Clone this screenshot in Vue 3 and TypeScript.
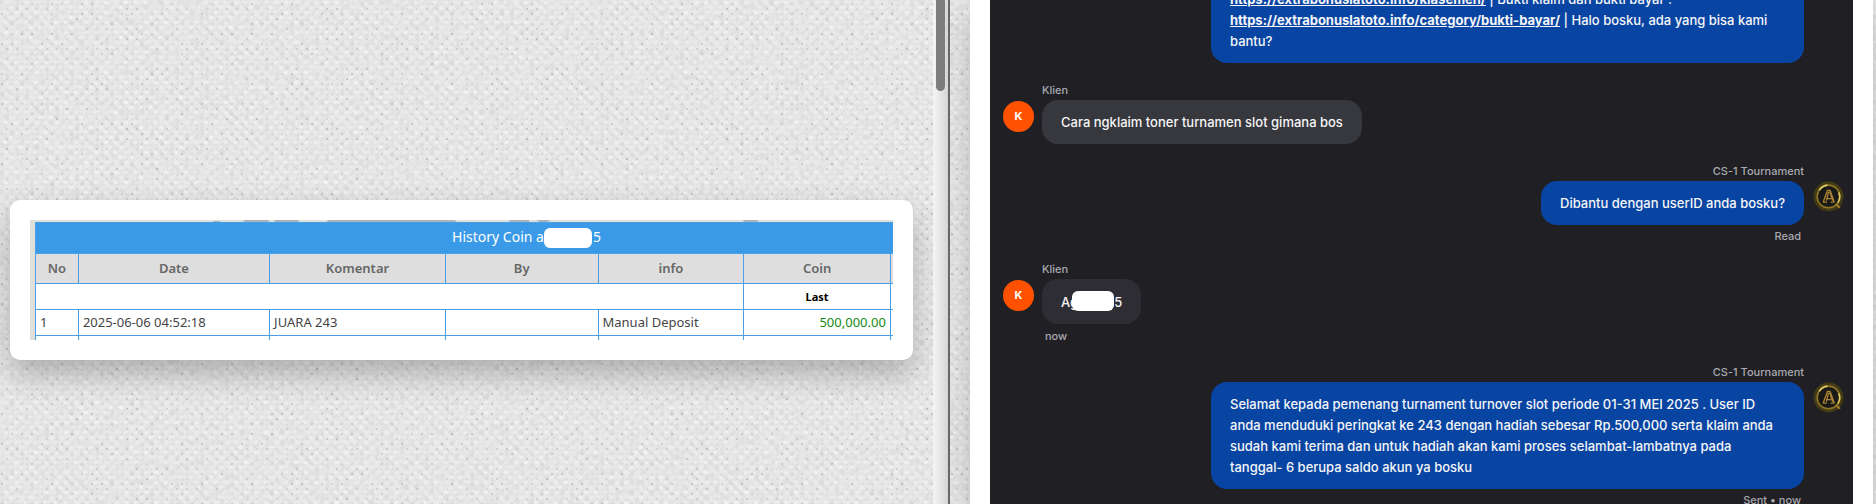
<script setup lang="ts">
interface Speck { x: number; y: number; o: number; w: number }
interface Message {
  id: number
  side: 'client' | 'agent'
  author: string
  text?: string
  tone?: string
  status?: string
}

// Woven paper: staggered dots with seeded variation in strength.
let seed = 7
function random(): number {
  seed = (seed * 16807) % 2147483647
  return seed / 2147483647
}
const tile = 200
const specks: Speck[] = []
const threads: Speck[] = []
for (let row = 0; row < tile / 5; row++) {
  for (let col = 0; col < tile / 10; col++) {
    const x = col * 10 + (row % 2) * 5
    specks.push({ x: x + 1, y: row * 5 + 3, o: 0.03 + random() * random() * 0.2, w: 2 })
    threads.push({ x: x + 4, y: row * 5 + 1, o: 0.1 + random() * 0.35, w: 4 })
  }
}

const columns: string[] = ['No', 'Date', 'Komentar', 'By', 'info', 'Coin']

const messages: Message[] = [
  { id: 2, side: 'client', author: 'Klien', text: 'Cara ngklaim toner turnamen slot gimana bos' },
  { id: 3, side: 'agent', author: 'CS-1 Tournament', text: 'Dibantu dengan userID anda bosku?', status: 'Read' },
  { id: 4, side: 'client', author: 'Klien', tone: 'dim', status: 'now' },
  {
    id: 5,
    side: 'agent',
    author: 'CS-1 Tournament',
    text: 'Selamat kepada pemenang turnament turnover slot periode 01-31 MEI 2025 . User ID anda menduduki peringkat ke 243 dengan hadiah sebesar Rp.500,000 serta klaim anda sudah kami terima dan untuk hadiah akan kami proses selambat-lambatnya pada tanggal- 6 berupa saldo akun ya bosku',
    status: 'Sent • now',
  },
]
</script>

<template>
  <div class="page">
    <svg class="paper" aria-hidden="true">
      <defs>
        <pattern id="weave" :width="tile" :height="tile" patternUnits="userSpaceOnUse">
          <rect :width="tile" :height="tile" fill="#e8e8e8" />
          <rect v-for="(t, i) in threads" :key="'t' + i" :x="t.x" :y="t.y" :width="t.w" height="3" rx="1" fill="#fff" :opacity="t.o" />
          <rect v-for="(s, i) in specks" :key="'s' + i" :x="s.x" :y="s.y" :width="s.w" height="2" rx="1" fill="#000" :opacity="s.o" />
        </pattern>
        <filter id="grain" x="0" y="0" width="100%" height="100%">
          <feTurbulence type="fractalNoise" baseFrequency="0.2" numOctaves="1" seed="4" />
          <feColorMatrix values="0 0 0 0 0  0 0 0 0 0  0 0 0 0 0  0.8 0 0 0 -0.33" />
        </filter>
      </defs>
      <rect width="100%" height="100%" fill="url(#weave)" />
      <rect width="100%" height="100%" filter="url(#grain)" opacity="0.18" />
    </svg>

    <main class="panes">
      <section class="left">
        <div class="stage">
          <div class="card">
            <div class="shot">
              <svg class="strip" viewBox="0 0 863 2" preserveAspectRatio="none" aria-hidden="true">
                <path d="M179 1h7v1h-7zM209 0h26v2h-24zM240 0h25v2h-23zM295 0h127l2 2H293zM477 0h20v2h-20zM504 0h15l-4 2h-7zM712 0h15v2h-14z" fill="#a9b3bd" />
              </svg>
              <table>
                <colgroup>
                  <col class="c-no"><col class="c-date"><col class="c-note"><col class="c-by"><col class="c-info"><col class="c-coin"><col>
                </colgroup>
                <thead>
                  <tr class="title">
                    <th colspan="7">History Coin a<span class="mask"></span>5</th>
                  </tr>
                  <tr class="heads">
                    <th v-for="c in columns" :key="c" scope="col">{{ c }}</th>
                    <td></td>
                  </tr>
                </thead>
                <tbody>
                  <tr class="last">
                    <td colspan="5"></td>
                    <th scope="col">Last</th>
                    <td></td>
                  </tr>
                  <tr>
                    <td>1</td>
                    <td>2025-06-06 04:52:18</td>
                    <td>JUARA 243</td>
                    <td></td>
                    <td>Manual Deposit</td>
                    <td class="amount">500,000.00</td>
                    <td></td>
                  </tr>
                  <tr><td></td><td></td><td></td><td></td><td></td><td></td><td></td></tr>
                </tbody>
              </table>
            </div>
          </div>
        </div>
        <div class="track"><div class="thumb"></div></div>
      </section>

      <section class="frame">
        <div class="thread">
          <article class="msg agent first">
            <div class="body">
              <p class="bubble"><a href="#klasemen">https://extrabonuslatoto.info/klasemen/</a> | Bukti klaim dan bukti bayar : <a href="#bukti-bayar">https://extrabonuslatoto.info/category/bukti-bayar/</a> | Halo bosku, ada yang bisa kami bantu?</p>
            </div>
            <div class="avatar"></div>
          </article>

          <article v-for="m in messages" :key="m.id" class="msg" :class="m.side">
            <div v-if="m.side === 'client'" class="avatar initial">K</div>
            <div class="body">
              <div class="author">{{ m.author }}</div>
              <p v-if="m.text" class="bubble">{{ m.text }}</p>
              <p v-else class="bubble" :class="m.tone">Ag<span class="mask chat-mask"></span>55</p>
              <div v-if="m.status" class="status">{{ m.status }}</div>
            </div>
            <svg v-if="m.side === 'agent'" class="avatar crest" viewBox="0 0 30 30" aria-hidden="true">
              <circle cx="15" cy="15" r="14.500" fill="#2c2815" />
              <circle cx="15" cy="15" r="13" fill="none" stroke="#4a3f17" stroke-width="3" opacity=".8" />
              <circle cx="15" cy="15" r="11" fill="#191917" stroke="#8f7626" stroke-width="1.6" />
              <path d="M6 9A11 11 0 0 1 14 4M25 11A11 11 0 0 1 24 21" fill="none" stroke="#dcc765" stroke-width="1.500" />
              <path d="M10 20 14 9h2.500l4 11M12.500 17h5M9.500 20.500h4M17 20.500h4M15 10.500 13 19M16 10l3 9" fill="none" stroke="#a88432" stroke-width="1.300" />
              <path d="m22 22 4 4" stroke="#987d25" stroke-width="2" />
            </svg>
          </article>
        </div>
      </section>
    </main>
  </div>
</template>

<style>
body { margin: 0; }
</style>

<style scoped>
* { box-sizing: border-box; }
.page {
  position: relative;
  height: 100vh;
  overflow: hidden;
  background: #e5e5e5;
}
.paper {
  position: absolute;
  inset: 0;
  width: 100%;
  height: 100%;
}
.panes {
  position: relative;
  display: grid;
  grid-template-columns: minmax(0, 950fr) minmax(0, 903fr);
  gap: 20px;
  height: 100%;
  padding-right: 3px;
}
.left {
  display: flex;
  min-width: 0;
  border-right: 2px solid #686868;
}
.stage {
  flex: 1;
  min-width: 0;
  padding: 200px 20px 0 10px;
}
.card {
  padding: 20px;
  border-radius: 10px;
  background: #fff;
  box-shadow: 0 14px 30px rgba(0, 0, 0, 0.25);
}
.shot {
  height: 120px;
  overflow: hidden;
  padding-left: 5px;
  background: #dfe0da;
}
.strip {
  display: block;
  width: 100%;
  height: 2px;
}
table {
  width: 100%;
  border-collapse: collapse;
  table-layout: fixed;
  background: #fff;
  color: #444;
  font-family: "Noto Sans", sans-serif;
  font-size: 13px;
  line-height: 18px;
}
.c-no { width: 5%; }
.c-date { width: 22.3%; }
.c-note { width: 20.5%; }
.c-by { width: 17.8%; }
.c-info { width: 17%; }
.c-coin { width: 17.1%; }
th, td {
  height: 26px;
  padding: 0 4px 2px;
  border: 1px solid #4a9fe4;
  text-align: left;
  white-space: nowrap;
}
th:last-child, td:last-child { border-right: 0; padding: 0; }
.title th:last-child {
  height: 31px;
  padding: 0 0 0 124px;
  background: #3a9ae8;
  color: #fff;
  font-size: 14px;
  font-weight: 400;
  text-align: center;
}
.heads th, .heads td {
  height: 30px;
  background: #dedede;
  color: #666;
  font-weight: 600;
  text-align: center;
}
.last th {
  color: #000;
  font-size: 11px;
  padding-bottom: 0;
  text-align: center;
}
td.amount {
  color: #168a16;
  text-align: right;
}
.mask {
  display: inline-block;
  position: relative;
  width: 48px;
  height: 20px;
  margin-right: 1px;
  border-radius: 6px;
  background: #fff;
  vertical-align: -6px;
}
.track {
  width: 15px;
  padding: 0 3px;
  background: linear-gradient(90deg, #f4f4f4, #d8d8d8);
}
.thumb {
  height: 91px;
  border-radius: 0 0 5px 5px;
  background: #7d7d7d;
}
.frame {
  min-width: 0;
  padding: 0 20px;
  background: #fff;
  box-shadow: 0 10px 30px rgba(0, 0, 0, 0.2);
}
.thread {
  display: flex;
  flex-direction: column;
  gap: 17px;
  height: 100%;
  overflow: hidden;
  padding: 0 9px 0 13px;
  background: #202024;
  color: #f5f5f7;
  font-family: Inter, sans-serif;
  font-size: 13px;
  font-weight: 500;
  line-height: 21px;
}
.msg {
  display: flex;
  flex-shrink: 0;
  gap: 8px;
}
.agent {
  justify-content: flex-end;
  gap: 9px;
}
.first { margin-top: -23px; }
.body {
  display: flex;
  flex-direction: column;
  align-items: flex-start;
  max-width: 593px;
}
.agent .body { align-items: flex-end; }
.author, .status {
  color: #a9a9b1;
  font-size: 11px;
}
.author {
  height: 20px;
  line-height: 20px;
}
.status {
  height: 17px;
  padding: 0 3px;
  line-height: 22px;
}
.client .status {
  height: 21px;
  line-height: 24px;
}
.bubble {
  margin: 0;
  padding: 12px 19px 11px;
  border-radius: 16px;
  background: #37383d;
}
.bubble.dim { background: #2e2d33; }
.agent .bubble { background: #0845a3; }
.bubble a {
  color: inherit;
  font-weight: 700;
}
.avatar {
  flex: none;
  width: 31px;
  height: 31px;
  margin-top: 21px;
}
.crest { margin-top: 20px; }
.initial {
  border-radius: 50%;
  background: #ff5100;
  color: #fff;
  font-size: 11px;
  font-weight: 700;
  line-height: 31px;
  text-align: center;
}
.chat-mask {
  width: 42px;
  margin: 0 -8px 0 -6px;
  vertical-align: -4px;
}
</style>
